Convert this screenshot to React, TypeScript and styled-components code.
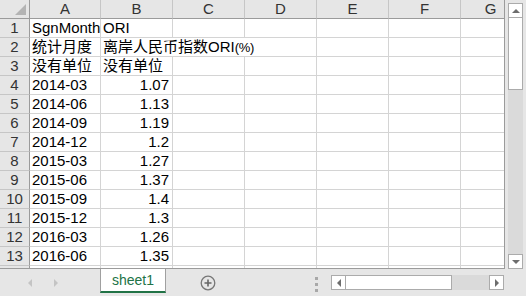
import React from 'react';
import styled, { createGlobalStyle } from 'styled-components';

const GlobalStyle = createGlobalStyle`
  body {
    margin: 0;
    background: #e6e6e6;
  }
`;

const cols = ['A', 'B', 'C', 'D', 'E', 'F', 'G'];

type Row = { a?: string; b?: string; bNum?: boolean; bSpan?: number };

const rows: Row[] = [
  { a: 'SgnMonth', b: 'ORI' },
  { a: '统计月度', b: '离岸人民币指数ORI', bSpan: 3 },
  { a: '没有单位', b: '没有单位' },
  { a: '2014-03', b: '1.07', bNum: true },
  { a: '2014-06', b: '1.13', bNum: true },
  { a: '2014-09', b: '1.19', bNum: true },
  { a: '2014-12', b: '1.2', bNum: true },
  { a: '2015-03', b: '1.27', bNum: true },
  { a: '2015-06', b: '1.37', bNum: true },
  { a: '2015-09', b: '1.4', bNum: true },
  { a: '2015-12', b: '1.3', bNum: true },
  { a: '2016-03', b: '1.26', bNum: true },
  { a: '2016-06', b: '1.35', bNum: true },
];

const Window = styled.div`
  width: 526px;
  height: 296px;
  display: flex;
  flex-direction: column;
  background: #e6e6e6;
  font-family: 'Liberation Sans', 'Noto Sans CJK SC', sans-serif;
  overflow: hidden;
`;

const Main = styled.div`
  display: flex;
  height: 269px;
`;

const Sheet = styled.div`
  box-sizing: border-box;
  width: 505px;
  height: 269px;
  background: #fff;
  border-right: 1px solid #9b9b9b;
  border-bottom: 1px solid #9b9b9b;
  overflow: hidden;
`;

const Grid = styled.div`
  display: grid;
  grid-template-columns: 30px 71px repeat(5, 72px) 60px;
  grid-auto-rows: 19px;
`;

const Cell = styled.div<{ $num?: boolean; $span?: number }>`
  box-sizing: border-box;
  grid-column: span ${(p) => p.$span || 1};
  border-right: 1px solid #d4d4d4;
  border-bottom: 1px solid #d4d4d4;
  padding: 0 3px 0 2px;
  font-size: 15px;
  line-height: 18px;
  color: #000;
  white-space: nowrap;
  text-align: ${(p) => (p.$num ? 'right' : 'left')};
`;

const Pct = styled.span`
  font-size: 13px;
  letter-spacing: -0.3px;
`;

const ColHead = styled.div`
  box-sizing: border-box;
  background: #e6e6e6;
  border-right: 1px solid #c6c6c6;
  border-bottom: 1px solid #9b9b9b;
  font-size: 15px;
  line-height: 18px;
  color: #333;
  text-align: center;
`;

const Corner = styled(ColHead)`
  border-right: 1px solid #9b9b9b;
  display: flex;
  align-items: flex-end;
  justify-content: flex-end;
  padding: 0 3px 3px 0;
`;

const RowHead = styled.div`
  box-sizing: border-box;
  background: #e6e6e6;
  border-right: 1px solid #9b9b9b;
  border-bottom: 1px solid #c6c6c6;
  font-size: 15px;
  line-height: 18px;
  color: #333;
  text-align: center;
`;

const VScroll = styled.div`
  flex: 1;
  display: flex;
  flex-direction: column;
  padding: 3px 0 0 3px;
`;

const ArrowBtn = styled.div`
  box-sizing: border-box;
  width: 15px;
  height: 15px;
  background: #fff;
  border: 1px solid #ababab;
  display: flex;
  align-items: center;
  justify-content: center;
  flex: none;
`;

const VThumb = styled.div`
  box-sizing: border-box;
  width: 15px;
  height: 72px;
  background: #fff;
  border: 1px solid #ababab;
  border-top: none;
`;

const VTrack = styled.div`
  width: 15px;
  flex: 1;
  background: #dadada;
`;

const BottomBar = styled.div`
  height: 27px;
  display: flex;
  align-items: flex-start;
`;

const Nav = styled.div`
  width: 100px;
  height: 27px;
  display: flex;
  align-items: center;
  gap: 22px;
  padding-left: 28px;
  box-sizing: border-box;
`;

const Tab = styled.div`
  box-sizing: border-box;
  width: 66px;
  height: 24px;
  background: #fff;
  border-left: 1px solid #a0a0a0;
  border-right: 1px solid #a0a0a0;
  border-bottom: 2px solid #217346;
  color: #217346;
  font-size: 14px;
  line-height: 22px;
  text-align: center;
`;

const AddSheet = styled.div`
  width: 84px;
  height: 27px;
  display: flex;
  align-items: center;
  justify-content: center;
`;

const Dots = styled.div`
  margin: 8px 0 0 65px;
  width: 3px;
  display: flex;
  flex-direction: column;
  gap: 3px;
  span {
    width: 3px;
    height: 3px;
    background: #a8a8a8;
  }
`;

const HScroll = styled.div`
  margin: 6px 0 0 13px;
  display: flex;
  height: 15px;
`;

const HThumb = styled.div`
  box-sizing: border-box;
  width: 106px;
  height: 15px;
  background: #fff;
  border: 1px solid #ababab;
  border-left: none;
`;

const HTrack = styled.div`
  width: 37px;
  height: 15px;
  background: #dadada;
`;

const Tri = ({ dir, color = '#6d6d6d' }: { dir: 'up' | 'down' | 'left' | 'right'; color?: string }) => {
  const pts = {
    up: '0,4 4,0 8,4',
    down: '0,0 8,0 4,4',
    left: '4,0 4,8 0,4',
    right: '0,0 0,8 4,4',
  }[dir];
  const vertical = dir === 'up' || dir === 'down';
  return (
    <svg width={vertical ? 8 : 4} height={vertical ? 4 : 8}>
      <polygon points={pts} fill={color} />
    </svg>
  );
};

export default function App() {
  return (
    <>
      <GlobalStyle />
      <Window>
        <Main>
          <Sheet>
            <Grid>
              <Corner>
                <svg width="11" height="11">
                  <polygon points="11,0 11,11 0,11" fill="#b4b4b4" />
                </svg>
              </Corner>
              {cols.map((c) => (
                <ColHead key={c}>{c}</ColHead>
              ))}
              {rows.map((r, i) => {
                const used = 2 + (r.bSpan ? r.bSpan - 1 : 0);
                return (
                  <React.Fragment key={i}>
                    <RowHead>{i + 1}</RowHead>
                    <Cell>{r.a}</Cell>
                    <Cell $num={r.bNum} $span={r.bSpan}>
                      {r.b}
                      {r.bSpan && <Pct>(%)</Pct>}
                    </Cell>
                    {cols.slice(used).map((c) => (
                      <Cell key={c} />
                    ))}
                  </React.Fragment>
                );
              })}
              {/* row 14 only peeks in under the last full row */}
              <RowHead />
              {cols.map((c) => (
                <Cell key={c} />
              ))}
            </Grid>
          </Sheet>
          <VScroll>
            <ArrowBtn>
              <Tri dir="up" />
            </ArrowBtn>
            <VThumb />
            <VTrack />
            <ArrowBtn>
              <Tri dir="down" />
            </ArrowBtn>
          </VScroll>
        </Main>
        <BottomBar>
          <Nav>
            <Tri dir="left" color="#c4c4c4" />
            <Tri dir="right" color="#c4c4c4" />
          </Nav>
          <Tab>sheet1</Tab>
          <AddSheet>
            <svg width="16" height="16" viewBox="0 0 16 16">
              <circle cx="8" cy="8" r="6.8" fill="none" stroke="#777" strokeWidth="1.3" />
              <path d="M4.5 8h7M8 4.5v7" stroke="#666" strokeWidth="1.6" />
            </svg>
          </AddSheet>
          <Dots>
            <span />
            <span />
            <span />
          </Dots>
          <HScroll>
            <ArrowBtn>
              <Tri dir="left" />
            </ArrowBtn>
            <HThumb />
            <HTrack />
            <ArrowBtn>
              <Tri dir="right" />
            </ArrowBtn>
          </HScroll>
        </BottomBar>
      </Window>
    </>
  );
}
